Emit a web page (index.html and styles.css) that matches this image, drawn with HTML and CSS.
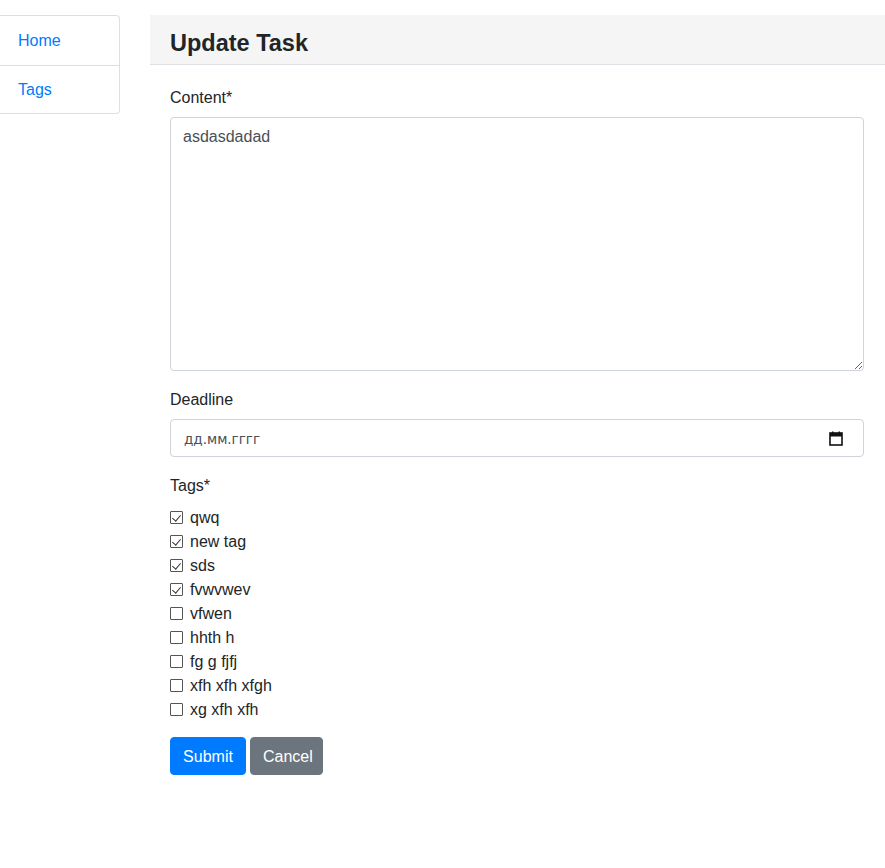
FILE: index.html
```html
<!DOCTYPE html>
<html lang="ru">
<head>
<meta charset="utf-8">
<title>Update Task</title>
<link rel="stylesheet" href="styles.css">
</head>
<body>
<div class="layout">
  <nav class="sidebar">
    <a class="nav-item" href="#">Home</a>
    <a class="nav-item" href="#">Tags</a>
  </nav>
  <main class="main">
    <header class="page-header"><h1>Update Task</h1></header>
    <form class="form">
      <div class="group">
        <label class="label">Content*</label>
        <textarea class="control textarea">asdasdadad</textarea>
      </div>
      <div class="group">
        <label class="label">Deadline</label>
        <div class="control date">
          <span class="date-text">дд.мм.гггг</span>
          <svg class="cal" width="14" height="15" viewBox="0 0 14 15"><rect x="1" y="2" width="12" height="12" fill="none" stroke="#111" stroke-width="1.6"/><rect x="1" y="2" width="12" height="3.5" fill="#111"/><rect x="3" y="0.5" width="1.5" height="2.5" fill="#111"/><rect x="9.5" y="0.5" width="1.5" height="2.5" fill="#111"/></svg>
        </div>
      </div>
      <div class="group">
        <label class="label">Tags*</label>
        <ul class="checks">
          <li class="check"><span class="box on"></span><span class="ct">qwq</span></li>
          <li class="check"><span class="box on"></span><span class="ct">new tag</span></li>
          <li class="check"><span class="box on"></span><span class="ct">sds</span></li>
          <li class="check"><span class="box on"></span><span class="ct">fvwvwev</span></li>
          <li class="check"><span class="box"></span><span class="ct">vfwen</span></li>
          <li class="check"><span class="box"></span><span class="ct">hhth h</span></li>
          <li class="check"><span class="box"></span><span class="ct">fg g fjfj</span></li>
          <li class="check"><span class="box"></span><span class="ct">xfh xfh xfgh</span></li>
          <li class="check"><span class="box"></span><span class="ct">xg xfh xfh</span></li>
        </ul>
      </div>
      <div class="buttons">
        <button type="button" class="btn primary">Submit</button>
        <button type="button" class="btn secondary">Cancel</button>
      </div>
    </form>
  </main>
</div>
</body>
</html>
```
FILE: styles.css
```css
* { box-sizing: border-box; }
body {
  margin: 0;
  font-family: "Segoe UI", "Liberation Sans", Arial, sans-serif;
  font-size: 16px;
  line-height: 24px;
  color: #212529;
  background: #fff;
}
.layout {
  display: flex;
  gap: 30px;
  padding-top: 15px;
}
.sidebar {
  width: 120px;
  flex: none;
  display: flex;
  flex-direction: column;
  align-self: flex-start;
  border: 1px solid rgba(0,0,0,.125);
  border-left: none;
  border-radius: 0 4px 4px 0;
}
.nav-item {
  display: block;
  height: 49px;
  padding: 13px 18px 11px;
  color: #007bff;
  text-decoration: none;
}
.nav-item + .nav-item {
  border-top: 1px solid rgba(0,0,0,.125);
  height: 48px;
  padding-top: 12px;
}
.main { flex: 1; min-width: 0; }
.page-header {
  background: #f5f5f5;
  border-bottom: 1px solid #dee2e6;
  height: 50px;
  padding: 7px 20px 0;
  display: flex;
  align-items: center;
}
.page-header h1 {
  margin: 0;
  font-size: 23.5px;
  font-weight: 700;
  line-height: 1.2;
  color: #212529;
}
.form { padding: 20px 21px 0 20px; }
.group { margin-bottom: 16px; }
.label { display: block; padding-top: 1px; margin-bottom: 7px; }
.control {
  display: block;
  width: 100%;
  border: 1px solid #ced4da;
  border-radius: 4px;
  color: #495057;
  font: inherit;
  background: #fff;
}
.textarea {
  height: 254px;
  padding: 7px 12px 5px;
  resize: vertical;
}
.date {
  height: 38px;
  padding: 1px 20px 0 13px;
  display: flex;
  align-items: center;
  justify-content: space-between;
}
.date-text {
  font-family: "DejaVu Sans", sans-serif;
  font-size: 13.5px;
  color: #495057;
}
.cal { display: block; }
.checks { list-style: none; margin: 0; padding: 0; }
.check {
  display: flex;
  align-items: center;
  gap: 7px;
  height: 24px;
}
.ct { padding-top: 2px; }
.box {
  width: 13px;
  height: 13px;
  border: 1px solid #555;
  border-radius: 1px;
  background: #fff;
  position: relative;
  flex: none;
}
.box.on::after {
  content: "";
  position: absolute;
  left: 3px;
  top: 1px;
  width: 4px;
  height: 7px;
  border: solid #333;
  border-width: 0 1.5px 1.5px 0;
  transform: rotate(40deg);
}
.buttons { display: flex; gap: 4px; }
.btn {
  height: 38px;
  padding: 2px 12px 0;
  border: 1px solid transparent;
  border-radius: 4px;
  font: inherit;
  color: #fff;
}
.primary { background: #007bff; border-color: #007bff; width: 76px; }
.secondary { background: #6c757d; border-color: #6c757d; width: 73px; }
```
